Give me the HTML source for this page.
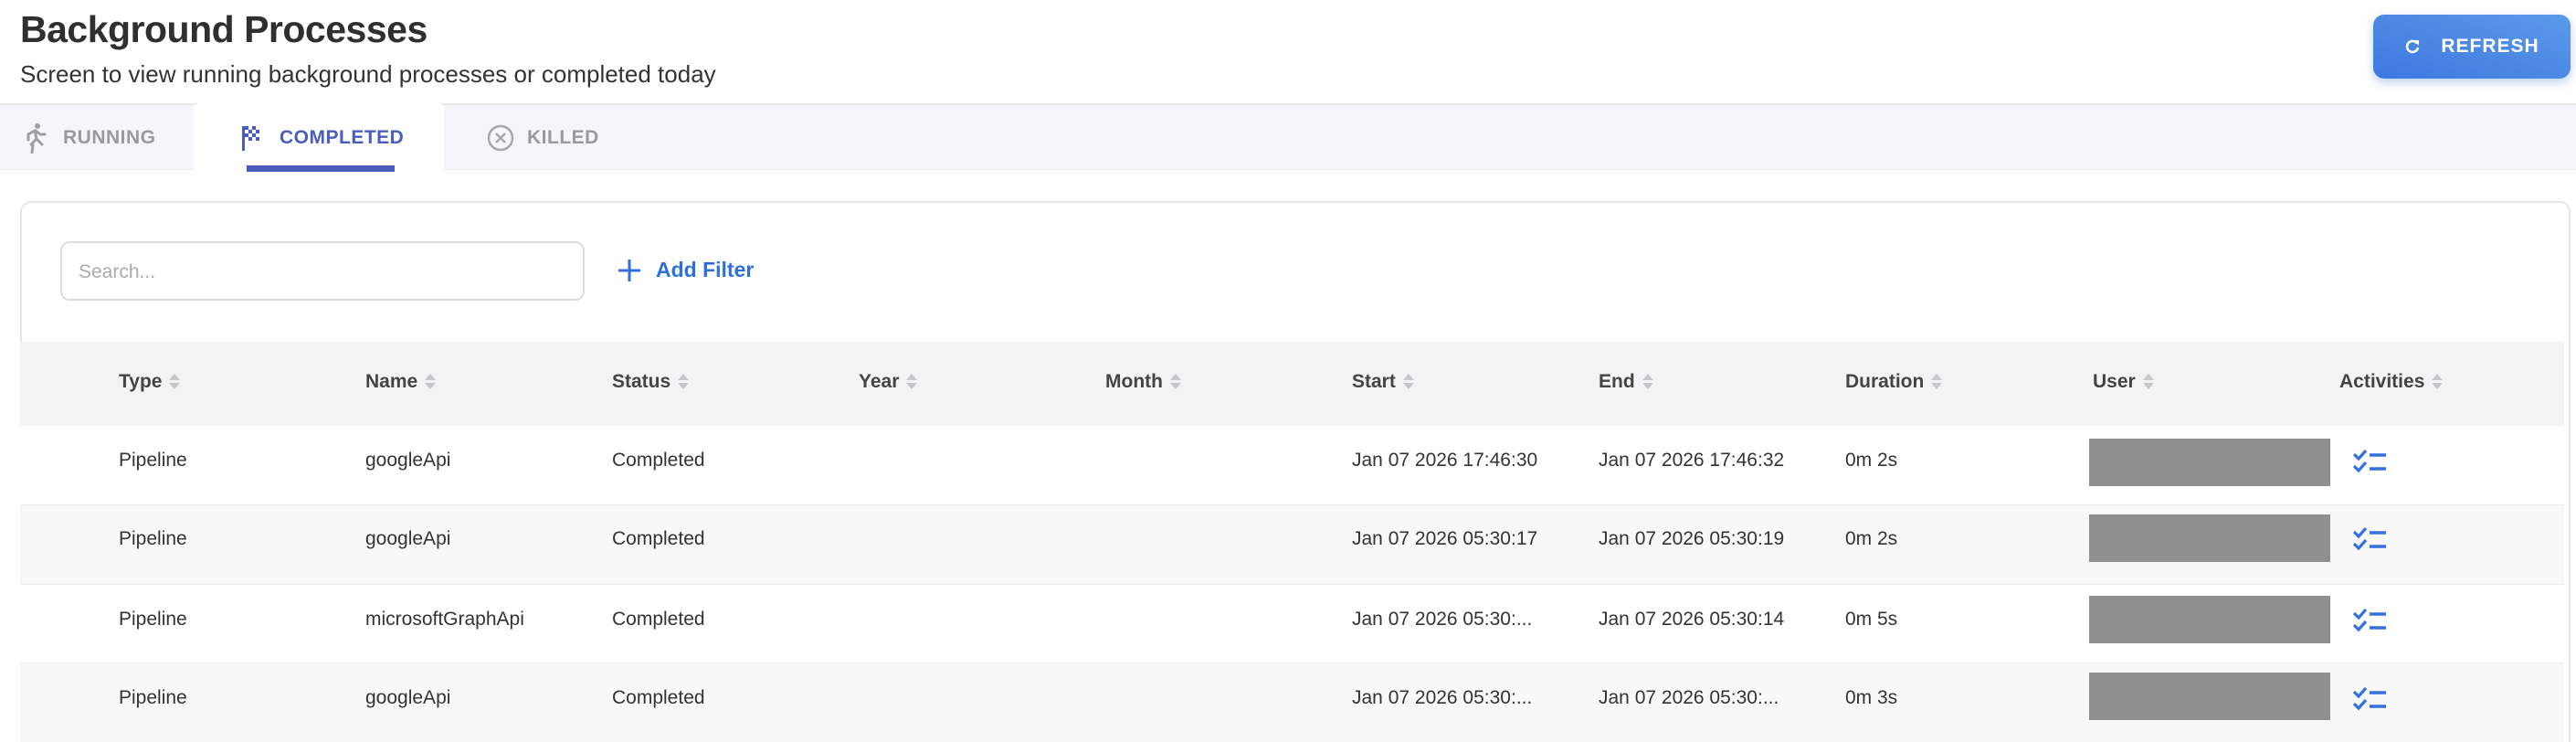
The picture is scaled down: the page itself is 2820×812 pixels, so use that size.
<!DOCTYPE html>
<html><head><meta charset="utf-8"><style>
*{box-sizing:border-box;margin:0;padding:0}
html,body{width:2820px;height:812px;overflow:hidden}
body{background:#fff;font-family:"Liberation Sans",sans-serif;color:#333;position:relative}
.abs{position:absolute;white-space:nowrap}
h1{position:absolute;left:22px;top:9px;font-size:41px;font-weight:bold;color:#2f2f2f;letter-spacing:-0.5px}
.sub{left:22px;top:66px;font-size:26px;color:#333}
.btn{left:2598px;top:16px;width:216px;height:70px;border-radius:12px;background:linear-gradient(to top right,#3d78e0,#5a9ae8);box-shadow:0 4px 10px rgba(60,120,220,0.35);color:#fff;font-weight:bold;font-size:21px;letter-spacing:1px;display:flex;align-items:center;justify-content:center;gap:22px}
.tabs{left:0;top:113px;width:2820px;height:73px;background:#f5f6fb;border-top:2px solid #e8e9ee;border-bottom:1px solid #ececf0}
.tab{top:0;height:72px;display:flex;align-items:center;font-size:21px;font-weight:bold;color:#9a9a9a;letter-spacing:0.5px}
.card{left:22px;top:220px;width:2792px;height:592px;border:2px solid #e6e6e6;border-bottom:none;border-radius:12px 12px 0 0;background:#fff}
.search{left:66px;top:264px;width:574px;height:65px;border:2px solid #dcdcdc;border-radius:10px;font-size:21px;color:#aaa;padding:20px 0 0 18px}
.add{left:676px;top:282px;font-size:23px;font-weight:bold;color:#2f6fdd;display:flex;align-items:center;gap:16px}
.thead{left:22px;top:374px;width:2785px;height:92px;background:#f3f3f3}
.th{font-size:21px;font-weight:bold;color:#444;top:406px;display:flex;align-items:center;gap:8px}
.row{left:22px;width:2785px;height:87px}
.td{font-size:21px;color:#333}
.sort{display:inline-block;width:12px;height:18px;position:relative}
.sort:before{content:"";position:absolute;left:0;top:0;border-left:6px solid transparent;border-right:6px solid transparent;border-bottom:7px solid #c6c6cc}
.sort:after{content:"";position:absolute;left:0;top:10px;border-left:6px solid transparent;border-right:6px solid transparent;border-top:7px solid #c6c6cc}
.gray{left:2287px;width:264px;height:52px;background:#8f8f8f}
</style></head><body>
<h1>Background Processes</h1>
<div class="abs sub">Screen to view running background processes or completed today</div>
<div class="abs btn"><svg width="18" height="18" viewBox="0 0 18 18"><path d="M14 5.5A6 6 0 1 0 15 10" fill="none" stroke="#fff" stroke-width="2.6"/><path d="M10 2h6v6z" fill="#fff"/></svg><span>REFRESH</span></div>

<div class="abs tabs">
 <div class="abs" style="left:212px;top:-2px;width:274px;height:75px;background:#fff;border-radius:6px 6px 0 0"></div>
 <div class="abs tab" style="left:24px"><svg width="28" height="34" viewBox="0 0 28 34"><circle cx="17" cy="4" r="3" fill="#a0a0a0"/><path d="M14 9l-7 4v6M14 9l2 9 -6 6 M16 18l6 6 M15 9l5 4 5 0 M12 24l-1 10" fill="none" stroke="#a0a0a0" stroke-width="3" stroke-linecap="round"/></svg><span style="margin-left:17px">RUNNING</span></div>
 <div class="abs tab" style="left:265px;color:#4a5dbf"><svg width="24" height="28" viewBox="0 0 24 28"><rect x="0" y="1" width="3" height="27" fill="#4a5dbf"/><g fill="#4a5dbf"><rect x="3" y="1" width="4" height="4"/><rect x="11" y="1" width="4" height="4"/><rect x="7" y="5" width="4" height="4"/><rect x="15" y="5" width="4" height="4"/><rect x="3" y="9" width="4" height="4"/><rect x="11" y="9" width="4" height="4"/><rect x="7" y="13" width="4" height="4"/><rect x="15" y="13" width="4" height="4"/></g></svg><span style="margin-left:17px">COMPLETED</span></div>
 <div class="abs" style="left:270px;top:66px;width:162px;height:7px;background:#4a5dbf"></div>
 <div class="abs tab" style="left:533px"><svg width="30" height="30" viewBox="0 0 30 30"><circle cx="15" cy="15" r="13" fill="none" stroke="#a8a8a8" stroke-width="2.5"/><path d="M10 10l10 10M20 10l-10 10" stroke="#a8a8a8" stroke-width="2.5"/></svg><span style="margin-left:14px">KILLED</span></div>
</div>

<div class="abs card"></div>
<div class="abs search">Search...</div>
<div class="abs add"><svg width="26" height="26" viewBox="0 0 26 26"><path d="M13 1v24M1 13h24" stroke="#2f6fdd" stroke-width="3"/></svg><span>Add Filter</span></div>

<div class="abs thead"></div>
<div class="abs th" style="left:130px">Type <i class="sort"></i></div>
<div class="abs th" style="left:400px">Name <i class="sort"></i></div>
<div class="abs th" style="left:670px">Status <i class="sort"></i></div>
<div class="abs th" style="left:940px">Year <i class="sort"></i></div>
<div class="abs th" style="left:1210px">Month <i class="sort"></i></div>
<div class="abs th" style="left:1480px">Start <i class="sort"></i></div>
<div class="abs th" style="left:1750px">End <i class="sort"></i></div>
<div class="abs th" style="left:2020px">Duration <i class="sort"></i></div>
<div class="abs th" style="left:2291px">User <i class="sort"></i></div>
<div class="abs th" style="left:2561px">Activities <i class="sort"></i></div>

<div class="abs row" style="top:466px;background:#fff"></div>
<div class="abs row" style="top:552px;background:#f8f8f8;border-top:1px solid #eee"></div>
<div class="abs row" style="top:639px;background:#fff;border-top:1px solid #eee"></div>
<div class="abs row" style="top:725px;background:#f8f8f8;border-top:1px solid #eee"></div>

<div class="abs td" style="left:130px;top:492px">Pipeline</div>
<div class="abs td" style="left:400px;top:492px">googleApi</div>
<div class="abs td" style="left:670px;top:492px">Completed</div>
<div class="abs td" style="left:1480px;top:492px">Jan 07 2026 17:46:30</div>
<div class="abs td" style="left:1750px;top:492px">Jan 07 2026 17:46:32</div>
<div class="abs td" style="left:2020px;top:492px">0m 2s</div>

<div class="abs td" style="left:130px;top:578px">Pipeline</div>
<div class="abs td" style="left:400px;top:578px">googleApi</div>
<div class="abs td" style="left:670px;top:578px">Completed</div>
<div class="abs td" style="left:1480px;top:578px">Jan 07 2026 05:30:17</div>
<div class="abs td" style="left:1750px;top:578px">Jan 07 2026 05:30:19</div>
<div class="abs td" style="left:2020px;top:578px">0m 2s</div>

<div class="abs td" style="left:130px;top:666px">Pipeline</div>
<div class="abs td" style="left:400px;top:666px">microsoftGraphApi</div>
<div class="abs td" style="left:670px;top:666px">Completed</div>
<div class="abs td" style="left:1480px;top:666px">Jan 07 2026 05:30:...</div>
<div class="abs td" style="left:1750px;top:666px">Jan 07 2026 05:30:14</div>
<div class="abs td" style="left:2020px;top:666px">0m 5s</div>

<div class="abs td" style="left:130px;top:752px">Pipeline</div>
<div class="abs td" style="left:400px;top:752px">googleApi</div>
<div class="abs td" style="left:670px;top:752px">Completed</div>
<div class="abs td" style="left:1480px;top:752px">Jan 07 2026 05:30:...</div>
<div class="abs td" style="left:1750px;top:752px">Jan 07 2026 05:30:...</div>
<div class="abs td" style="left:2020px;top:752px">0m 3s</div>

<div class="abs gray" style="top:480px"></div>
<div class="abs gray" style="top:563px"></div>
<div class="abs gray" style="top:652px"></div>
<div class="abs gray" style="top:736px"></div>

<svg class="abs" style="left:2576px;top:492px" width="38" height="26" viewBox="0 0 38 26"><path d="M1 5l5 5 8-9M1 18l5 5 8-9" fill="none" stroke="#3370e0" stroke-width="3.2"/><path d="M18 6h18M18 21h18" stroke="#3370e0" stroke-width="3.5"/></svg>
<svg class="abs" style="left:2576px;top:577px" width="38" height="26" viewBox="0 0 38 26"><path d="M1 5l5 5 8-9M1 18l5 5 8-9" fill="none" stroke="#3370e0" stroke-width="3.2"/><path d="M18 6h18M18 21h18" stroke="#3370e0" stroke-width="3.5"/></svg>
<svg class="abs" style="left:2576px;top:666px" width="38" height="26" viewBox="0 0 38 26"><path d="M1 5l5 5 8-9M1 18l5 5 8-9" fill="none" stroke="#3370e0" stroke-width="3.2"/><path d="M18 6h18M18 21h18" stroke="#3370e0" stroke-width="3.5"/></svg>
<svg class="abs" style="left:2576px;top:752px" width="38" height="26" viewBox="0 0 38 26"><path d="M1 5l5 5 8-9M1 18l5 5 8-9" fill="none" stroke="#3370e0" stroke-width="3.2"/><path d="M18 6h18M18 21h18" stroke="#3370e0" stroke-width="3.5"/></svg>
</body></html>
